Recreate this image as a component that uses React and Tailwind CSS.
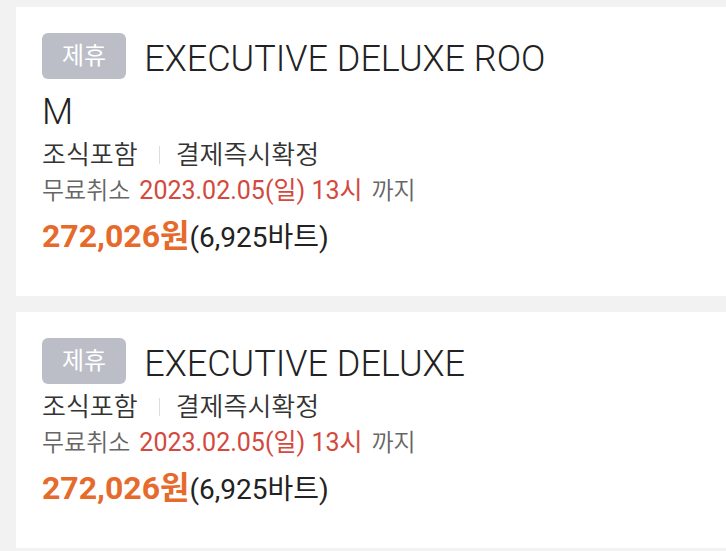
const font = { fontFamily: "Roboto, 'Noto Sans CJK KR', sans-serif" };

const rooms = [
  { id: 1, name: "EXECUTIVE DELUXE ROOM" },
  { id: 2, name: "EXECUTIVE DELUXE" },
];

function RoomCard({ room }) {
  return (
    <div className="ml-4 bg-white pl-[26px] pt-[26px] pb-[38px]">
      <div className="w-[515px] break-all text-[36px] font-light leading-[53px] text-[#222]">
        <span className="mr-[18px] inline-block h-[46px] rounded-[6px] bg-[#bbbec7] px-5 align-top text-[24px] font-normal leading-[46px] text-white">
          제휴
        </span>
        {room.name}
      </div>
      <div className="flex items-center text-[26px] font-[350] leading-[32px] text-[#333]">
        <span>조식포함</span>
        <span className="ml-[21px] mr-[16px] h-[18px] w-px bg-[#dddddd]" />
        <span>결제즉시확정</span>
      </div>
      <div className="mt-[4px] text-[24px] font-[350] leading-[32px] text-[#666]">
        무료취소
        <span className="mx-[9px] text-[25px] font-normal text-[#d4483e]">
          2023.02.05(일) 13시
        </span>
        까지
      </div>
      <div className="mt-[9px] text-[32px] leading-[40px]">
        <span className="font-bold text-[#e66a2c]">272,026원</span>
        <span className="text-[28px] text-[#222]">(6,925바트)</span>
      </div>
    </div>
  );
}

export default function App() {
  return (
    <div className="min-h-[551px] bg-[#f2f2f2] pt-[7px]" style={font}>
      <div className="flex flex-col gap-4">
        {rooms.map((room) => (
          <RoomCard key={room.id} room={room} />
        ))}
      </div>
    </div>
  );
}
